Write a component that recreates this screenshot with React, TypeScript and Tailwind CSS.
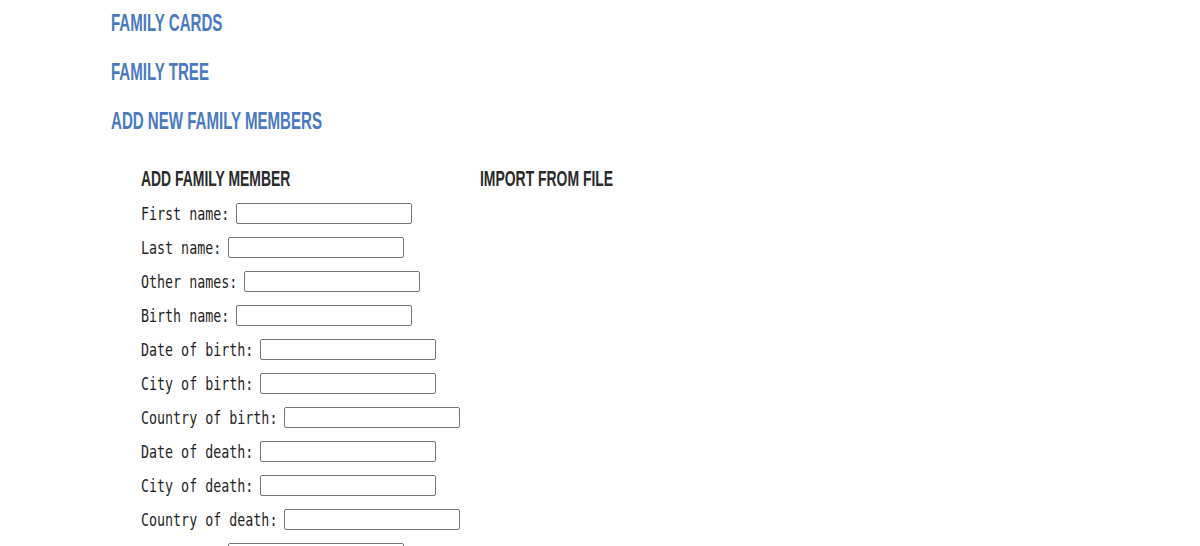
const headings = ["Family cards", "Family tree", "Add new family members"];

const fields = [
  "First name",
  "Last name",
  "Other names",
  "Birth name",
  "Date of birth",
  "City of birth",
  "Country of birth",
  "Date of death",
  "City of death",
  "Country of death",
  "Biography",
  "Mother",
  "Father",
];

// condensed display face: Liberation Sans bold squeezed to the narrow headline look
const display = "font-['Liberation_Sans',Arial,sans-serif] font-bold uppercase origin-left";

export default function App() {
  return (
    <div className="min-h-screen bg-white pl-[111px]">
      <nav className="flex flex-col gap-[3px]">
        {headings.map((h) => (
          <a
            key={h}
            href="#"
            className={`${display} block scale-x-[0.655] text-[23px] leading-[46px] text-[#4a7abf]`}
          >
            {h}
          </a>
        ))}
      </nav>

      <div className="mt-[20px] flex pl-[30px]">
        <section className="w-[339px]">
          <h3 className={`${display} scale-x-[0.633] text-[22px] leading-[30px] text-[#2b2b2b]`}>
            Add family member
          </h3>
          <form className="mt-[9px] flex flex-col gap-[13px]">
            {fields.map((f) => (
              <div key={f} className="flex h-[21px] items-center">
                <span className="shrink-0" style={{ width: `${(f.length + 2) * 8}px` }}>
                  <label className="block origin-left translate-y-[1px] scale-x-[0.784] whitespace-nowrap font-['DejaVu_Sans_Mono',monospace] text-[17px] leading-[21px] text-[#1f1f1f]">
                    {f}:
                  </label>
                </span>
                <input
                  type="text"
                  className="-ml-[1px] h-[21px] w-[176px] rounded-[2px] border border-[#767676] bg-white px-[2px] text-[13.33px]"
                />
              </div>
            ))}
          </form>
        </section>
        <section>
          <h3 className={`${display} scale-x-[0.633] text-[22px] leading-[30px] text-[#2b2b2b]`}>
            Import from file
          </h3>
        </section>
      </div>
    </div>
  );
}
